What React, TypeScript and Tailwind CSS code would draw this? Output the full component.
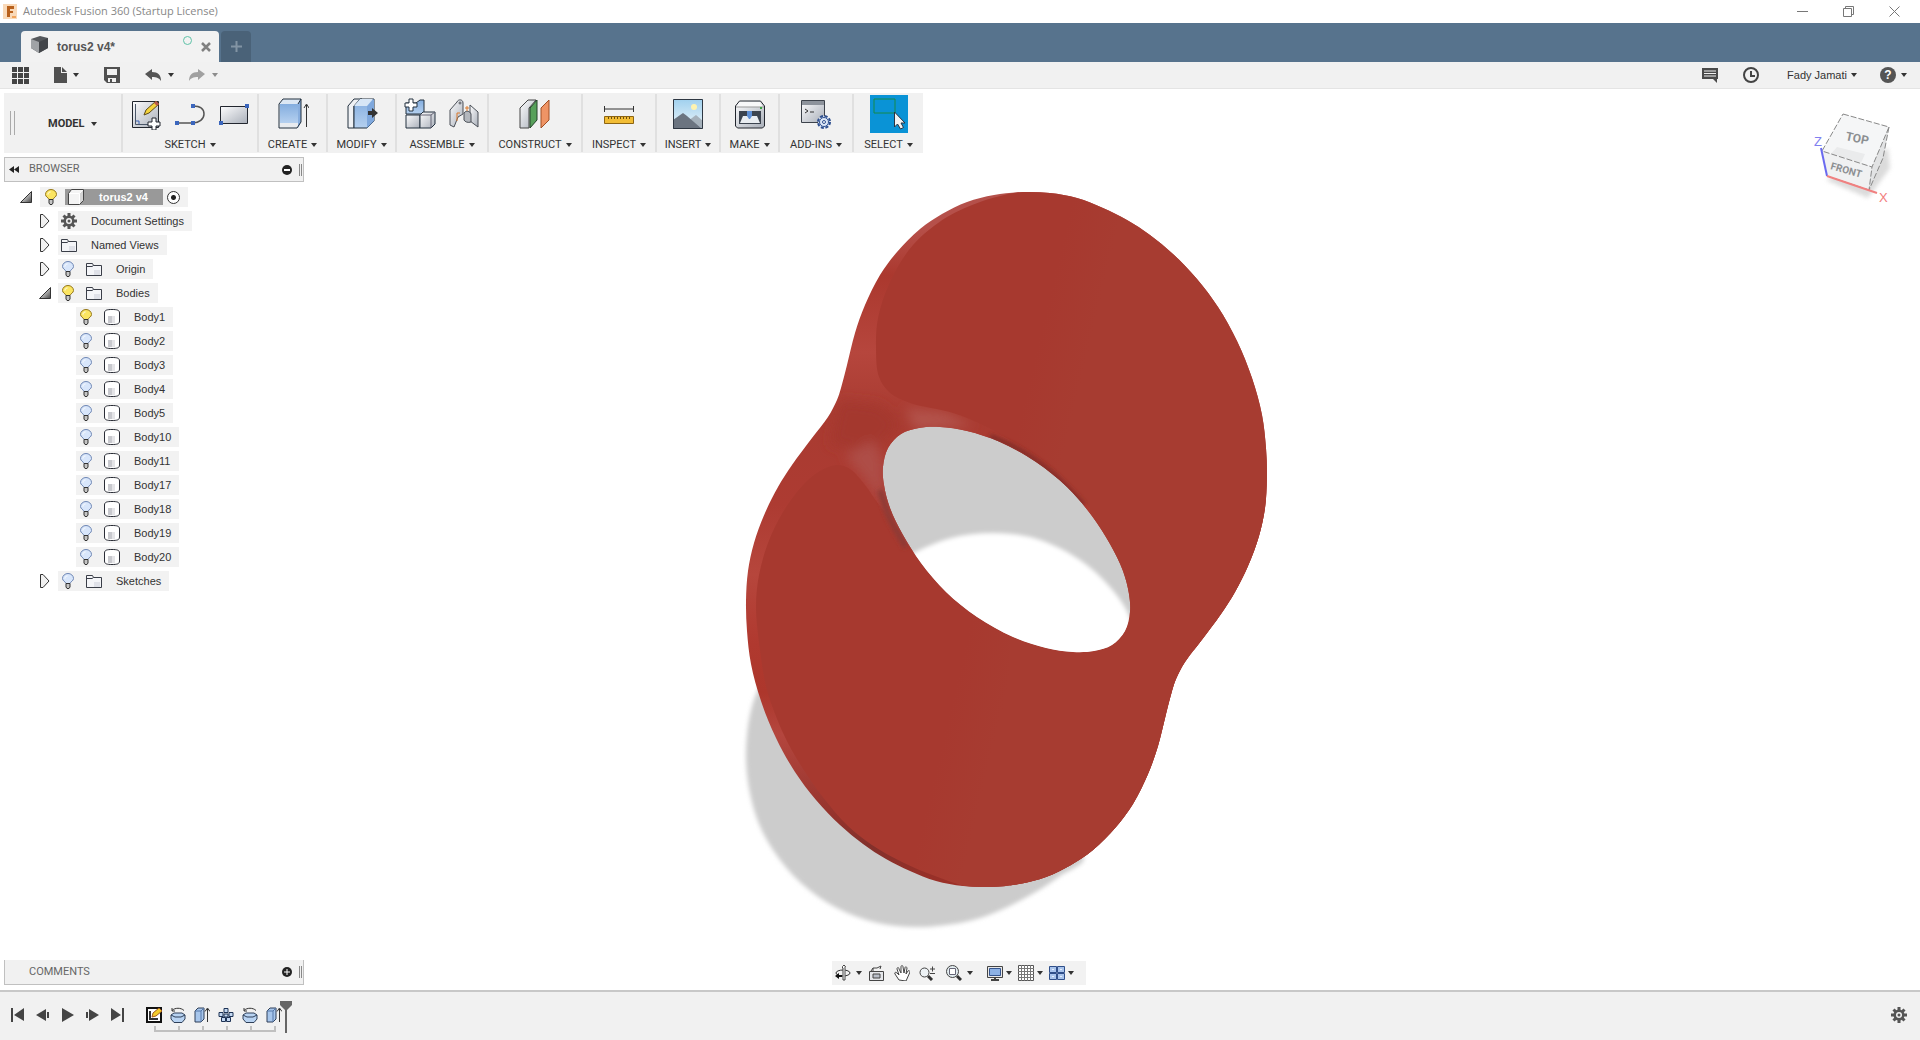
import { useState, type ReactNode } from "react";
import { clsx } from "clsx";

type Point = [number, number];

// Centripetal Catmull-Rom curve through the points, as an SVG path
function curve(points: Point[], closed = true) {
  const n = points.length;
  const at = (i: number) => (closed ? points[(i + n) % n] : points[Math.max(0, Math.min(n - 1, i))]);
  const dist = (a: Point, b: Point) => Math.sqrt(Math.hypot(a[0] - b[0], a[1] - b[1])) || 1;
  let d = `M${points[0][0]} ${points[0][1]}`;
  for (let i = 0; i < (closed ? n : n - 1); i++) {
    const [p0, p1, p2, p3] = [at(i - 1), at(i), at(i + 1), at(i + 2)];
    const [a, b, c] = [dist(p0, p1), dist(p1, p2), dist(p2, p3)];
    const c1 = [0, 1].map((k) => (a * a * p2[k] - b * b * p0[k] + (2 * a * a + 3 * a * b + b * b) * p1[k]) / (3 * a * (a + b)));
    const c2 = [0, 1].map((k) => (c * c * p1[k] - b * b * p3[k] + (2 * c * c + 3 * c * b + b * b) * p2[k]) / (3 * c * (c + b)));
    d += `C${c1[0]} ${c1[1]} ${c2[0]} ${c2[1]} ${p2[0]} ${p2[1]}`;
  }
  return closed ? d + "Z" : d;
}

// The part is point-symmetric, so only half of each contour is listed
function mirrored(half: Point[]): Point[] {
  return [...half, ...half.map(([x, y]): Point => [2013 - x, 1079 - y])];
}

const OUTLINE = mirrored([
  [754, 543], [765, 513], [778, 487], [792, 465], [812, 438], [828, 417], [837, 400], [841, 388], [847, 365],
  [855, 333], [865, 305], [880, 275], [897, 252], [920, 229], [942, 214], [967, 202], [994, 195], [1023, 192],
  [1050, 193], [1077, 198], [1103, 208], [1127, 220], [1150, 235], [1173, 254], [1197, 279], [1218, 307],
  [1237, 341], [1252, 378], [1262, 415], [1266, 448], [1267, 478], [1265, 508],
]);

const HOLE = mirrored([
  [890, 508], [884, 485], [883, 467], [888, 448], [901, 434], [919, 428], [940, 427], [967, 431], [1000, 442],
  [1036, 462], [1067, 487], [1092, 516], [1110, 544],
]);

const GROUND: Point[] = [
  [900, 562], [914, 553], [951, 538], [994, 533], [1037, 539], [1080, 560], [1109, 586], [1130, 618], [1135, 670], [900, 670],
];

const SHADOW: Point[] = [
  [790, 650], [757, 692], [746, 755], [755, 813], [773, 850], [801, 883], [837, 908], [878, 923], [923, 927],
  [980, 918], [1034, 893], [1060, 876], [1084, 858], [1000, 800], [900, 700],
];

const UPPER_FACE: Point[] = [
  [1023, 191], [1004, 195], [980, 202], [947, 217], [913, 245], [890, 282], [878, 318], [876, 348], [879, 377],
  [890, 393], [910, 403], [953, 413], [987, 427], [1013, 442], [1040, 460], [1080, 496], [1115, 545], [1150, 640],
  [1300, 620], [1300, 300], [1150, 160],
];

const LOWER_FACE: Point[] = [
  [837, 465], [820, 471], [803, 485], [783, 512], [768, 543], [759, 575], [756, 607], [760, 650], [767, 690],
  [784, 735], [800, 764], [822, 796], [848, 826], [872, 845], [902, 862], [935, 876], [975, 888], [1100, 890],
  [1200, 680], [1130, 620], [1060, 640], [960, 590], [908, 545], [897, 528], [877, 502], [865, 485], [850, 469],
];

function Caret({ light }: { light?: boolean }) {
  return (
    <svg width="6" height="4" viewBox="0 0 6 4" className={clsx("shrink-0", light ? "fill-[#8c8c8c]" : "fill-[#333333]")}>
      <path d="M0 0h6L3 4z" />
    </svg>
  );
}

function Icon({ size = 16, children }: { size?: number; children: ReactNode }) {
  return (
    <svg width={size} height={size} viewBox={`0 0 ${size} ${size}`} fill="none" className="shrink-0">
      {children}
    </svg>
  );
}

/* ---------- ribbon icons, 32px ---------- */

const RibbonIcons: Record<string, ReactNode> = {
  sketch: (
    <Icon size={32}>
      <path d="M2.500 3.500h26v26h-26z" fill="url(#steel)" stroke="#22262e" />
      <path d="M5.500 6v20.500H20" stroke="#4a5668" />
      <path d="M6 23h3v3" stroke="#3a63b8" />
      <path d="M14 17l2-5 10-9 3 3-10 9z" fill="#f4d33c" stroke="#5c4a18" />
      <path d="M24 5l2-2 3 3-2 2z" fill="#b7584f" />
      <path d="M22 20h4v4h4v4h-4v4h-4v-4h-4v-4h4z" fill="#fff" stroke="#22262e" />
    </Icon>
  ),
  line: (
    <Icon size={32}>
      <path d="M3 25h16c6 0 11-4 11-9s-4-8-11-8" stroke="#555" strokeWidth="1.500" />
      <path d="M1 23h4v4H1zM17 23h4v4h-4zM17 6h4v4h-4z" fill="#3b66bd" />
    </Icon>
  ),
  rect: (
    <Icon size={32}>
      <path d="M2.500 8.500h27v17h-27z" fill="url(#steel)" stroke="#22262e" />
      <path d="M1 23h4v4H1zM27 6h4v4h-4z" fill="#3b66bd" />
    </Icon>
  ),
  create: (
    <Icon size={32}>
      <path d="M2 6l4-5h18l-3 5v24H3z" fill="#dbe7f4" />
      <path d="M3 6h18v19H3z" fill="url(#blue)" />
      <path d="M3 25h18v5H3z" fill="#e8ebef" />
      <path d="M21 6l3-5v23l-3 6z" fill="#88aede" />
      <path d="M2 6l4-5h18v23l-4 6H2zM21 6l3-5" stroke="#22303f" />
      <path d="M29.500 29V7M27 10l2.500-4 2.500 4" stroke="#333" />
    </Icon>
  ),
  modify: (
    <Icon size={32}>
      <path d="M2 8l6-7h8L8 8v22H2z" fill="#eff1f4" stroke="#22303f" />
      <path d="M8 8l6-7h14v22l-7 7H8z" fill="url(#blue)" stroke="#22303f" />
      <path d="M21 8l7-7v22l-7 7z" fill="#7fa8dd" />
      <path d="M8 8h13l6-7H14z" fill="#d7e6f6" />
      <path d="M22 13h4v-3l6 5-6 5v-3h-4z" fill="#333" />
    </Icon>
  ),
  assemble: (
    <Icon size={32}>
      <path d="M2 5h10l4-3h4v14H2z" fill="url(#blue)" stroke="#22303f" />
      <path d="M2 17h14v13H2z" fill="url(#steel)" stroke="#22303f" />
      <path d="M16 17l3-3h12v12l-4 4H16z" fill="url(#steel)" stroke="#22303f" />
      <path d="M16 17h11v13M27 17l4-3" stroke="#667" />
      <path d="M5 1h4v4h4v4H9v4H5V9H1V5h4z" fill="#fff" stroke="#22303f" />
    </Icon>
  ),
  joint: (
    <Icon size={32}>
      <path d="M2 12l7-8c1-3 6-3 6 1v11l-5 3-4 10-4-2z" fill="url(#steel)" stroke="#4a4f57" />
      <path d="M22 7l8 7v15l-8-6z" fill="url(#steel)" stroke="#4a4f57" />
      <path d="M16 15c2-3 6-2 7 1v8c-3 1-6 0-7-2z" fill="#b3b7bd" stroke="#4a4f57" />
      <path d="M19 13V8M17 10h4M12 15h-3v8" stroke="#dd7a2c" />
      <circle cx="12" cy="5" r="1" fill="#fff" stroke="#4a4f57" />
    </Icon>
  ),
  construct: (
    <Icon size={32}>
      <path d="M1 10l8-8h8l-7 8v20H1z" fill="url(#steel)" stroke="#444" />
      <path d="M11 10l7-8v20l-7 8z" fill="#57a05a" stroke="#24432a" />
      <path d="M22 10l8-8v20l-8 8z" fill="#ef9465" stroke="#a04e24" />
    </Icon>
  ),
  inspect: (
    <Icon size={32}>
      <path d="M1.500 8v6M30.500 8v6M2 11h28" stroke="#333" />
      <path d="M1.500 18.500h29v7h-29z" fill="#f2bd35" stroke="#8d6512" />
      <path d="M5.500 19v2M8.500 19v2M11.500 19v2M14.500 19v2M17.500 19v2M20.500 19v2M23.500 19v2M26.500 19v2" stroke="#6d4d0c" />
    </Icon>
  ),
  insert: (
    <Icon size={32}>
      <path d="M1 1h30v30H1z" fill="url(#sky)" />
      <circle cx="22" cy="9" r="3" fill="#fdf3b0" />
      <path d="M16 23l8-6 7 6v8H16z" fill="#a5b1bb" />
      <path d="M1 22l10-7 4 3 15 13H1z" fill="#6b7480" />
      <path d="M1.500 1.500h29v29h-29z" stroke="#2e3742" />
    </Icon>
  ),
  make: (
    <Icon size={32}>
      <path d="M1.500 8l4-5h21l4 5v20l-2 2h-25l-2-2z" fill="url(#steel)" stroke="#22262e" />
      <path d="M3 9l3-5h20l3 5z" fill="#f8f8f9" />
      <path d="M2 9h28" stroke="#999" />
      <path d="M5 13h22v13H5z" fill="#3c444f" />
      <path d="M9 18h14l3 7H6z" fill="#e9edf1" />
      <path d="M13 13h5v5l-2 3h-1l-2-3z" fill="#5e8fd4" />
      <path d="M26 9h2v2h-2z" fill="#3aa342" />
    </Icon>
  ),
  addins: (
    <Icon size={32}>
      <path d="M1.500 2.500h23v22h-23z" fill="url(#steel)" stroke="#3c424b" />
      <path d="M2 3h22v4H2z" fill="#8d939c" />
      <path d="M5 11l3 2-3 2M10 14h4" stroke="#333" />
      <circle cx="24" cy="24" r="6" fill="#dce7f7" stroke="#2e4f8f" strokeWidth="2" strokeDasharray="3 1.700" />
      <circle cx="24" cy="24" r="4.500" fill="#dce7f7" stroke="#2e4f8f" />
      <circle cx="24" cy="24" r="1.500" fill="#fff" stroke="#2e4f8f" />
    </Icon>
  ),
  select: (
    <Icon size={38}>
      <path d="M4 4h21v14H4z" stroke="#148a4b" />
      <path d="M24.500 17v15l3-3 3 5 3-1.500-2.500-4.500h4z" fill="#f2f2f2" stroke="#2b3340" />
    </Icon>
  ),
};

const RIBBON = [
  { label: "SKETCH", icons: ["sketch", "line", "rect"], width: "w-[136px]" },
  { label: "CREATE", icons: ["create"], width: "w-[69px]" },
  { label: "MODIFY", icons: ["modify"], width: "w-[69px]" },
  { label: "ASSEMBLE", icons: ["assemble", "joint"], width: "w-[92px]" },
  { label: "CONSTRUCT", icons: ["construct"], width: "w-[94px]" },
  { label: "INSPECT", icons: ["inspect"], width: "w-[74px]" },
  { label: "INSERT", icons: ["insert"], width: "w-[64px]" },
  { label: "MAKE", icons: ["make"], width: "w-[59px]" },
  { label: "ADD-INS", icons: ["addins"], width: "w-[74px]" },
  { label: "SELECT", icons: ["select"], width: "w-[69px]" },
];

function Defs() {
  return (
    <svg width="0" height="0" className="absolute">
      <defs>
        <linearGradient id="steel" x1="0" y1="0" x2="1" y2="1">
          <stop offset="0" stopColor="#fdfdfe" />
          <stop offset="1" stopColor="#a9afb9" />
        </linearGradient>
        <linearGradient id="blue" x1="0" y1="0" x2="0" y2="1">
          <stop offset="0" stopColor="#83addf" />
          <stop offset="1" stopColor="#b5d0ef" />
        </linearGradient>
        <linearGradient id="sky" x1="0" y1="0" x2="0" y2="1">
          <stop offset="0" stopColor="#9fd0ee" />
          <stop offset="1" stopColor="#eef6fa" />
        </linearGradient>
        <linearGradient id="tri" x1="0" y1="0" x2="1" y2="1">
          <stop offset="0.300" stopColor="#e2e2e2" />
          <stop offset="1" stopColor="#444444" />
        </linearGradient>
      </defs>
    </svg>
  );
}

/* ---------- small icons ---------- */

function Gear() {
  return (
    <Icon>
      <g stroke="#555555" strokeWidth="3">
        <path d="M8 0v16M0 8h16M2.500 2.500l11 11M13.500 2.500l-11 11" />
      </g>
      <circle cx="8" cy="8" r="5.500" fill="#555555" />
      <circle cx="8" cy="8" r="3" fill="#f2f2f2" />
      <circle cx="8" cy="8" r="1.500" fill="#555555" />
    </Icon>
  );
}

function Bulb({ on }: { on?: boolean }) {
  return (
    <svg width="12" height="16" viewBox="0 0 12 16" fill="none" className="shrink-0">
      <path
        d="M4 10.500C3.500 8.500.5 8 .5 5.500a5.500 5 0 0 1 11 0c0 2.500-3 3-3.500 5z"
        fill={on ? "#fbe562" : "#d8e6fb"}
        stroke={on ? "#94761a" : "#6f87b4"}
      />
      <path d="M3 5.500C3 4 4 3 5.500 3" stroke="#fff" />
      <path d="M4 10.500h4V14l-1 1.500H5L4 14z" fill="#c5c5c5" stroke="#333" />
    </svg>
  );
}

function Folder() {
  return (
    <Icon>
      <path d="M.5 2.500h6l1 2h8v10H.5z" fill="#f4f5f8" stroke="#3a3e48" />
      <path d="M1 5.500h5l1.500-1" stroke="#3a3e48" />
      <path d="M8 9h6v5H8z" fill="#dfe1e8" />
    </Icon>
  );
}

function Body() {
  return (
    <Icon>
      <path d="M.5 4C.5 1 3 .5 8 .5s7.500.5 7.500 3.500v8c0 3-2.500 3.500-7.500 3.500S.5 15 .5 12z" fill="#fff" stroke="#2a2d36" />
      <path d="M4 7h4v7H4z" fill="#c8c9ce" />
      <path d="M8 7h3v7H8z" fill="#e4e4e7" />
    </Icon>
  );
}

function Component() {
  return (
    <Icon>
      <path d="M.5 4.500l3-4h12v11l-4 4H.5z" fill="#f4f4f4" />
      <path d="M11.500 4.500l4-4v11l-4 4z" fill="#d4d4d4" />
      <path d="M1 4.500h10.500v11M11.500 4.500l3.500-4" stroke="#fff" />
      <path d="M.5 4.500l3-4h12v11l-4 4H.5z" stroke="#444" />
    </Icon>
  );
}

function Twisty({ open }: { open?: boolean }) {
  return (
    <svg width="12" height="14" viewBox="0 0 12 14" className="shrink-0">
      {open ? (
        <path d="M11.500 1.500v11H.5z" fill="url(#tri)" stroke="#333" />
      ) : (
        <path d="M1.500 .5v13H4l6-6.500-6-6.500z" fill="#f0f0f0" stroke="#333" />
      )}
    </svg>
  );
}

interface TreeRowProps {
  label: string;
  indent: string;
  open?: boolean;
  leaf?: boolean;
  bulb?: "on" | "off";
  icon: ReactNode;
}

function TreeRow({ label, indent, open, leaf, bulb, icon }: TreeRowProps) {
  return (
    <li className={clsx("flex h-5 items-center gap-[7px]", indent)}>
      {!leaf && (
        <button aria-label={`Toggle ${label}`}>
          <Twisty open={open} />
        </button>
      )}
      <button className={clsx("flex h-5 items-center bg-[#f2f2f2] pr-2", leaf ? "pl-1" : "pl-[3px]")}>
        {bulb && (
          <span className={clsx("flex", leaf ? "w-6" : "w-[25px] pl-px")}>
            <Bulb on={bulb === "on"} />
          </span>
        )}
        {icon}
        <span className="pl-[14px]">{label}</span>
      </button>
    </li>
  );
}

const BODIES = ["Body1", "Body2", "Body3", "Body4", "Body5", "Body10", "Body11", "Body17", "Body18", "Body19", "Body20"];

function BrowserTree() {
  return (
    <ul className="mt-[5px] flex flex-col gap-1 text-[11px] text-[#333333]">
      <li className="flex h-5 items-center gap-2 pl-4">
        <button aria-label="Toggle torus2 v4">
          <Twisty open />
        </button>
        <div className="flex h-5 items-center gap-2 bg-[#f2f2f2] pr-2 pl-[5px]">
          <Bulb on />
          <div className="flex items-center">
            <button className="flex h-4 items-center bg-[#999999] pr-[15px] pl-[3px] font-bold text-white">
              <Component />
              <span className="pl-[15px]">torus2 v4</span>
            </button>
            <input
              type="radio"
              name="active-component"
              aria-label="Activate torus2 v4"
              defaultChecked
              className="ml-1 size-[13px] appearance-none rounded-full border border-[#333333] bg-white bg-[radial-gradient(circle,#222_0_2px,transparent_3px)]"
            />
          </div>
        </div>
      </li>
      <TreeRow label="Document Settings" indent="pl-[35px]" icon={<Gear />} />
      <TreeRow label="Named Views" indent="pl-[35px]" icon={<Folder />} />
      <TreeRow label="Origin" indent="pl-[35px]" bulb="off" icon={<Folder />} />
      <TreeRow label="Bodies" indent="pl-[35px]" open bulb="on" icon={<Folder />} />
      {BODIES.map((name, i) => (
        <TreeRow key={name} label={name} indent="pl-[72px]" leaf bulb={i === 0 ? "on" : "off"} icon={<Body />} />
      ))}
      <TreeRow label="Sketches" indent="pl-[35px]" bulb="off" icon={<Folder />} />
    </ul>
  );
}

/* ---------- canvas ---------- */

function Model() {
  return (
    <svg viewBox="0 157 1920 833" preserveAspectRatio="xMidYMin meet" className="absolute inset-0 h-full w-full">
      <defs>
        <filter id="soft" x="-10%" y="-10%" width="120%" height="120%">
          <feGaussianBlur stdDeviation="2" />
        </filter>
        <filter id="softer" x="-50%" y="-50%" width="200%" height="200%">
          <feGaussianBlur stdDeviation="6" />
        </filter>
        <clipPath id="hole">
          <path d={curve(HOLE)} />
        </clipPath>
        <clipPath id="body">
          <path d={curve(OUTLINE)} />
        </clipPath>
        <linearGradient id="rim" gradientUnits="userSpaceOnUse" x1="0" y1="192" x2="0" y2="887">
          <stop offset="0" stopColor="#b4504a" />
          <stop offset="0.050" stopColor="#b6504a" />
          <stop offset="0.120" stopColor="#ab382e" />
          <stop offset="0.230" stopColor="#b6463d" />
          <stop offset="0.320" stopColor="#a93b31" />
          <stop offset="0.450" stopColor="#ad3b32" />
          <stop offset="0.550" stopColor="#b6463c" />
          <stop offset="0.650" stopColor="#b0392f" />
          <stop offset="0.720" stopColor="#ad372c" />
          <stop offset="0.780" stopColor="#b4463e" />
          <stop offset="0.900" stopColor="#94332c" />
          <stop offset="0.940" stopColor="#82302b" />
          <stop offset="1" stopColor="#9e3027" />
        </linearGradient>
        <linearGradient id="face" gradientUnits="userSpaceOnUse" x1="1000" y1="500" x2="1050" y2="512">
          <stop offset="0" stopColor="#a7392f" />
          <stop offset="1" stopColor="#a73c31" />
        </linearGradient>
      </defs>
      <path d={curve(SHADOW)} fill="#cccccc" filter="url(#soft)" />
      <g clipPath="url(#body)">
        <path d="M700 150h600v800H700z" fill="url(#rim)" />
        <g filter="url(#softer)">
          <path d="M840 400l40 5 20 20-25 25-45-5z" fill="#a4372e" />
          <path d="M905 408l40 4 30 14-60 4z" fill="#b3534c" />
          <path d="M845 455l28-15 10 20 2 50-20-30z" fill="#ae4d46" />
        </g>
        <path d={curve(UPPER_FACE)} fill="url(#face)" />
        <path d={curve(LOWER_FACE)} fill="url(#face)" />
        <path d="M1090 500h200v400h-280V640h80z" fill="#a73c31" />
        <g fill="none" filter="url(#soft)">
          <path d={curve([[990, 436], [1016, 448], [1051, 472], [1084, 505]], false)} stroke="#7c2a25" strokeWidth="4" />
          <path d={curve([[880, 490], [889, 516], [906, 547]], false)} stroke="#8d3a35" strokeWidth="6" />
        </g>
      </g>
      <g clipPath="url(#hole)">
        <path d={curve(HOLE)} fill="#cccccc" />
        <path d={curve(GROUND)} fill="#ffffff" filter="url(#soft)" />
      </g>
    </svg>
  );
}

function ViewCube() {
  return (
    <svg width="90" height="100" viewBox="1805 105 90 100" className="absolute top-0 right-[25px] -mt-[52px]">
      <path d="M1826 180l42 18 22-30-2-20z" fill="#cccccc" filter="url(#soft)" opacity="0.700" />
      <path d="M1843 114l46 13-17 40-50-16z" fill="#f5f6f7" />
      <path d="M1822 151l50 16-3 23-42-14z" fill="#f0f1f2" />
      <path d="M1872 167l17-40-6 31-14 32z" fill="#e2e3e4" />
      <path d="M1837 147l28 7-4 9-30-9z" fill="#eaebec" />
      <path d="M1843 114l46 13-17 40-50-16zM1889 127l-6 31-14 32 3-23M1827 176l42 14" fill="none" stroke="#888888" strokeDasharray="6 2" />
      <text x="0" y="0" transform="translate(1845 140) rotate(12)" className="fill-[#8c8f92] font-[Roboto,sans-serif] text-[12px] font-bold">TOP</text>
      <text x="0" y="0" transform="translate(1830 169) rotate(16)" className="fill-[#8c8f92] font-[Roboto,sans-serif] text-[10px] font-bold">FRONT</text>
      <path d="M1821 148l6 28" stroke="#6a6af0" strokeWidth="2" />
      <path d="M1827 176l50 17" stroke="#f08080" strokeWidth="2" />
      <text x="1814" y="146" className="fill-[#8080f0] text-[13px]">Z</text>
      <text x="1879" y="202" className="fill-[#f27c7c] text-[13px]">X</text>
    </svg>
  );
}

const NAV: { name: string; caret?: string; gap: string; icon: ReactNode }[] = [
  {
    name: "Orbit", caret: "gap-[5px]", gap: "mr-[6px]",
    icon: <Icon><ellipse cx="8" cy="8" rx="7" ry="3" stroke="#333" /><path d="M7.500 3V1.500L9 0l1.500 1.500H10V15H8V3z" fill="#fff" stroke="#444" /><path d="M0 11l4-3v2h3v2H4v2z" fill="#111" /></Icon>,
  },
  {
    name: "Look At", gap: "mr-[10px]",
    icon: <Icon><path d="M1.500 6.500h14v9h-14z" fill="#e4e6ea" stroke="#444" /><path d="M5 9h7v4H5z" fill="#b9bec8" stroke="#444" /><path d="M3 6l2-3h4l4-2-1 3M5 3v3" stroke="#444" /></Icon>,
  },
  {
    name: "Pan", gap: "mr-[9px]",
    icon: <Icon><path d="M5 15L1 9c-1-2 1-2 2-1l2 2-2-6c0-2 2-2 2 0l2 4V2c0-2 2-2 2 0l1 6 1-5c0-2 2-1 2 0l-1 6 2-3c1-1 2 0 2 1l-4 9z" fill="#fff" stroke="#444" /></Icon>,
  },
  {
    name: "Zoom", gap: "mr-[11px]",
    icon: <Icon><circle cx="5.500" cy="7.500" r="4.500" fill="#edf2f5" stroke="#444" /><path d="M9 11l4 4" stroke="#333" strokeWidth="3" /><path d="M11 4h5M13.500 1.500v5M11 8.500h5" stroke="#444" /></Icon>,
  },
  {
    name: "Fit", caret: "gap-[5px]", gap: "mr-[14px]",
    icon: <Icon><circle cx="6.500" cy="6.500" r="6" fill="#e3edf0" stroke="#444" /><path d="M11 11l4 4" stroke="#333" strokeWidth="3" /><path d="M3.500 3.500h6v6h-6z" fill="#fff" stroke="#667" /></Icon>,
  },
  {
    name: "Display Settings", caret: "gap-[3px]", gap: "mr-[6px]",
    icon: <Icon><path d="M.5 1.500h15v11H.5z" fill="#e8e8e8" stroke="#444" /><path d="M2.500 3.500h11v7h-11z" fill="#8db2e6" stroke="#35558f" /><path d="M4 15h8M8 12v3" stroke="#444" strokeWidth="2" /></Icon>,
  },
  {
    name: "Grid and Snaps", caret: "gap-[3px]", gap: "mr-[6px]",
    icon: <Icon><path d="M.5 .5h15v15H.5z" fill="#fff" stroke="#555" /><path d="M3.500 0v16M6.500 0v16M9.500 0v16M12.500 0v16M0 3.500h16M0 6.500h16M0 9.500h16M0 12.500h16" stroke="#777" /></Icon>,
  },
  {
    name: "Viewports", caret: "gap-[3px]", gap: "",
    icon: <Icon><path d="M.5 1.500h7v6h-7zM8.500 1.500h7v6h-7zM.5 8.500h7v6h-7zM8.500 8.500h7v6h-7z" fill="#a9c4ec" stroke="#2f4f8a" /><path d="M3 4.500h2M11 4.500h2M3 11.500h2M11 11.500h2" stroke="#e4eefc" /></Icon>,
  },
];

/* ---------- timeline ---------- */

const SketchFeature = (
  <Icon>
    <path d="M1 1h14v14H1z" fill="#fff" stroke="#111" strokeWidth="2" />
    <path d="M4 4v8h8" stroke="#333" strokeWidth="2" />
    <path d="M6 10l1-4 6-5 3 3-6 5z" fill="#f3cd2a" stroke="#a35b1c" />
  </Icon>
);
const RevolveFeature = (
  <Icon>
    <path d="M1 8l3-2h8l3 2v4l-3 3.500H4L1 12z" fill="#b8d3f2" stroke="#2e3f58" />
    <path d="M1 8l4 2h6l4-2" stroke="#2e3f58" />
    <path d="M2 3.500C5 .5 11 .5 14 3.500M2 1v3h3" stroke="#333" />
  </Icon>
);
const ExtrudeFeature = (
  <Icon>
    <path d="M1 4l3-3h6v11l-3 3H1z" fill="#a7c6ec" stroke="#2e3f58" />
    <path d="M1 4h6v11M7 4l3-3" stroke="#5577a8" />
    <path d="M13.500 15V2M11 4.500L13.500 1 16 4.500" stroke="#333" />
  </Icon>
);
const PatternFeature = (
  <Icon>
    <g fill="#c3d8f2" stroke="#1d3255">
      <path d="M6 1.500h4v4H6zM1 5.500h4v4H1zM11 5.500h4v4h-4zM6 7h4v3H6zM3.500 10.500h4v4h-4zM8.500 10.500h4v4h-4z" strokeLinejoin="round" />
    </g>
  </Icon>
);

const TIMELINE = [
  { name: "Sketch1", icon: SketchFeature },
  { name: "Revolve1", icon: RevolveFeature },
  { name: "Extrude1", icon: ExtrudeFeature },
  { name: "Pattern1", icon: PatternFeature },
  { name: "Revolve2", icon: RevolveFeature },
  { name: "Extrude2", icon: ExtrudeFeature },
];

const PLAYBACK = [
  { name: "Go to start", d: "M0 1h2v14H0zM13 1v13L3 8z" },
  { name: "Step back", d: "M10 2v12L0 8zM11 5h2v6h-2z" },
  { name: "Play", d: "M1 1l12 7-12 7z" },
  { name: "Step forward", d: "M0 5h2v6H0zM3 2l10 6-10 6z" },
  { name: "Go to end", d: "M0 1l10 7-10 6zM11 1h2v14h-2z" },
];

export default function App() {
  const [step, setStep] = useState(5);

  return (
    <div className="flex min-h-screen flex-col bg-white font-['Liberation_Sans',Arial,sans-serif] text-[11px] text-[#333333]">
      <Defs />

      {/* Title bar */}
      <header className="flex h-[23px] items-center justify-between pr-5 pl-[3px]">
        <div className="flex items-center gap-[6px]">
          <svg width="14" height="15" viewBox="0 0 14 15">
            <path d="M0 0h14v15H0z" fill="#f9d9b8" />
            <path d="M4 2h7v3H7v2h3v2H7v4H4z" fill="#b8601b" />
            <path d="M9 12h4v2H9z" fill="#f0a45c" />
          </svg>
          <h1 className="font-['Open_Sans',sans-serif] text-[11px] text-[#888888]">Autodesk Fusion 360 (Startup License)</h1>
        </div>
        <div className="flex items-center gap-[35px] text-[#777777]">
          <button aria-label="Minimize">
            <svg width="11" height="11" viewBox="0 0 11 11" stroke="currentColor"><path d="M0 5.500h11" /></svg>
          </button>
          <button aria-label="Restore">
            <svg width="11" height="11" viewBox="0 0 11 11" fill="none" stroke="currentColor"><path d="M.5 2.500h8v8h-8zM2.500 2V.5h8v8H9" /></svg>
          </button>
          <button aria-label="Close">
            <svg width="11" height="11" viewBox="0 0 11 11" stroke="currentColor"><path d="M.5 .5l10 10M10.500 .5l-10 10" /></svg>
          </button>
        </div>
      </header>

      {/* Document tabs */}
      <div className="flex h-[39px] items-end gap-[2px] bg-[#57738d] pl-[21px]">
        <div className="flex h-[31px] w-[198px] items-center rounded-t bg-[#f2f2f2] pr-2 pl-[10px] text-[#555555]">
          <svg width="17" height="17" viewBox="0 0 17 17" className="mb-1">
            <path d="M0 3l9-3 8 2v10l-9 5-8-5z" fill="#55585c" />
            <path d="M0 3l8 3v11l-8-5z" fill="#a0a3a6" />
            <path d="M8 6l9-4v10l-9 5z" fill="#43464a" />
          </svg>
          <span className="flex-1 pl-[9px] text-xs font-bold">torus2 v4*</span>
          <span className="mb-3 size-[9px] rounded-full border border-[#5fc2a8]" />
          <button aria-label="Close tab" className="ml-[9px]">
            <svg width="10" height="10" viewBox="0 0 10 10" stroke="#808080" strokeWidth="2.500"><path d="M1 1l8 8M9 1L1 9" /></svg>
          </button>
        </div>
        <button aria-label="New tab" className="flex h-[31px] w-[30px] items-center justify-center rounded-t bg-[#4a6278]">
          <svg width="11" height="11" viewBox="0 0 11 11" stroke="#8294a4" strokeWidth="2"><path d="M5.500 0v11M0 5.500h11" /></svg>
        </button>
      </div>

      {/* Quick access bar */}
      <div className="flex h-[27px] items-center justify-between border-b border-[#e4e4e4] bg-[#f1f1f1] pr-[13px] pl-3">
        <div className="flex items-center">
          <button aria-label="Data panel">
            <svg width="17" height="17" viewBox="0 0 17 17" fill="#444444">
              <path d="M0 0h5v5H0zM6 0h5v5H6zM12 0h5v5h-5zM0 6h5v5H0zM6 6h5v5H6zM12 6h5v5h-5zM0 12h5v5H0zM6 12h5v5H6zM12 12h5v5h-5z" />
            </svg>
          </button>
          <button aria-label="File" className="ml-[25px] flex items-center gap-[6px]">
            <svg width="13" height="16" viewBox="0 0 13 16" fill="#505050"><path d="M0 0h7v6h6v10H0zM8 0l5 5H8z" /></svg>
            <Caret />
          </button>
          <button aria-label="Save" className="ml-[25px]">
            <svg width="16" height="16" viewBox="0 0 16 16">
              <path d="M0 0h16v16H3l-3-3z" fill="#505050" />
              <path d="M3 2h10v6H3zM4 11h8v4H4z" fill="#f1f1f1" />
              <path d="M6 12h2v3H6z" fill="#505050" />
            </svg>
          </button>
          <button aria-label="Undo" className="ml-[25px] flex items-center gap-[7px]">
            <svg width="16" height="13" viewBox="0 0 16 13" fill="#555555"><path d="M0 5l7-5v3c6 0 9 3 9 9-2-3-4-4-9-4v3z" /></svg>
            <Caret />
          </button>
          <button aria-label="Redo" className="ml-[15px] flex items-center gap-[7px]">
            <svg width="16" height="13" viewBox="0 0 16 13" fill="#a0a0a0"><path d="M16 5L9 0v3c-6 0-9 3-9 9 2-3 4-4 9-4v3z" /></svg>
            <Caret light />
          </button>
        </div>
        <div className="flex items-center">
          <button aria-label="Comments">
            <svg width="16" height="15" viewBox="0 0 16 15">
              <path d="M0 0h16v11h-1v4l-4-4H0z" fill="#4a4a4a" />
              <path d="M2 3h12M2 5.500h12M2 8h12" stroke="#f1f1f1" />
            </svg>
          </button>
          <button aria-label="Job status" className="ml-[25px]">
            <svg width="16" height="16" viewBox="0 0 16 16" fill="none" stroke="#444444" strokeWidth="2"><circle cx="8" cy="8" r="7" /><path d="M8 4v5h4" /></svg>
          </button>
          <button className="ml-[28px] flex items-center gap-1">
            Fady Jamati <Caret />
          </button>
          <button aria-label="Help" className="ml-[23px] flex items-center gap-[5px]">
            <span className="flex size-4 items-center justify-center rounded-full bg-[#555555] text-xs font-bold text-white">?</span>
            <Caret />
          </button>
        </div>
      </div>

      {/* Ribbon */}
      <nav className="mx-1 mt-1 flex h-[60px] items-stretch self-start bg-[#f1f1f1] py-px font-[Roboto,sans-serif]">
        <div className="flex w-[119px] items-center border-r-2 border-[#e0e0e0] pl-[6px]">
          <span className="h-6 w-[5px] border-x border-[#aaaaaa]" />
          <button className="ml-[33px] flex items-center gap-[6px] pt-[2px] font-bold">
            MODEL <Caret />
          </button>
        </div>
        {RIBBON.map((group) => (
          <div
            key={group.label}
            className={clsx("flex flex-col items-center border-[#e0e0e0] not-last:border-r-2", group.width)}
          >
            <div className="flex h-10 items-center gap-3">
              {group.icons.map((name) => (
                <button key={name} aria-label={name} className={clsx(name === "select" && "bg-[#0a93d6]")}>
                  {RibbonIcons[name]}
                </button>
              ))}
            </div>
            <button className="flex flex-1 items-center gap-1 pt-1 leading-[14px] whitespace-nowrap">
              {group.label} <Caret />
            </button>
          </div>
        ))}
      </nav>

      {/* Canvas */}
      <main className="relative mt-1 flex flex-1 flex-col pb-[5px]">
        <Model />
        <ViewCube />
        <aside className="relative ml-1 flex w-[300px] flex-1 flex-col">
          <div className="flex h-[25px] items-center border border-[#c0c0c0] bg-[#f1f1f1] pr-px font-[Roboto,sans-serif] text-[#666666]">
            <button aria-label="Collapse browser" className="ml-1">
              <svg width="10" height="7" viewBox="0 0 10 7" fill="#222222"><path d="M5 0v7L0 3.500zM10 0v7L5 3.500z" /></svg>
            </button>
            <h2 className="flex-1 pl-[10px]">BROWSER</h2>
            <button aria-label="Hide browser">
              <svg width="10" height="10" viewBox="0 0 10 10"><circle cx="5" cy="5" r="5" fill="#222" /><path d="M2 5h6" stroke="#fff" strokeWidth="2" /></svg>
            </button>
            <span className="ml-[7px] h-3 w-[3px] border-x border-[#888888]" />
          </div>
          <BrowserTree />
        </aside>
        <div className="relative flex items-end pt-4">
          <div className="ml-1 flex h-[25px] w-[300px] items-center border border-t-0 border-[#c0c0c0] bg-[#f1f1f1] pr-px font-[Roboto,sans-serif] text-[#666666]">
            <h2 className="flex-1 pl-6">COMMENTS</h2>
            <button aria-label="Show comments">
              <svg width="10" height="10" viewBox="0 0 10 10"><circle cx="5" cy="5" r="5" fill="#222" /><path d="M2 5h6M5 2v6" stroke="#fff" /></svg>
            </button>
            <span className="ml-[7px] h-3 w-[3px] border-x border-[#888888]" />
          </div>
          <div className="flex flex-1 justify-center pr-[306px]">
            <div className="flex h-6 items-center bg-[#f2f2f2] pr-3 pl-[3px]">
              {NAV.map((item) => (
                <button key={item.name} aria-label={item.name} className={clsx("flex items-center", item.caret, item.gap)}>
                  {item.icon}
                  {item.caret && <Caret />}
                </button>
              ))}
            </div>
          </div>
        </div>
      </main>

      {/* Timeline */}
      <footer className="flex h-[50px] items-center border-t-2 border-[#c8c8c8] bg-[#f1f1f1] pr-[13px] pb-[2px] pl-[11px]">
        <div className="flex gap-3">
          {PLAYBACK.map((control) => (
            <button key={control.name} aria-label={control.name}>
              <svg width="13" height="16" viewBox="0 0 13 16" fill="#444444"><path d={control.d} /></svg>
            </button>
          ))}
        </div>
        <ol className="relative ml-[22px] flex gap-2">
          {TIMELINE.map((feature, i) => (
            <li key={feature.name} className="flex">
              <button aria-label={feature.name} aria-current={i === step} onClick={() => setStep(i)}>
                {feature.icon}
              </button>
            </li>
          ))}
          <li aria-hidden className="pointer-events-none absolute top-0 left-0">
            <svg width="148" height="36" viewBox="0 0 148 36" fill="none" className="-mt-2">
              <path d="M9 27v5h120v-5M33 27v5M57 27v5M81 27v5M105 27v5" stroke="#c0c0c0" strokeWidth="2" />
              <path d="M134 2h12v4l-5 5v23h-2V11l-5-5z" fill="#666666" />
            </svg>
          </li>
        </ol>
        <button aria-label="Timeline settings" className="ml-auto">
          <Gear />
        </button>
      </footer>
    </div>
  );
}
